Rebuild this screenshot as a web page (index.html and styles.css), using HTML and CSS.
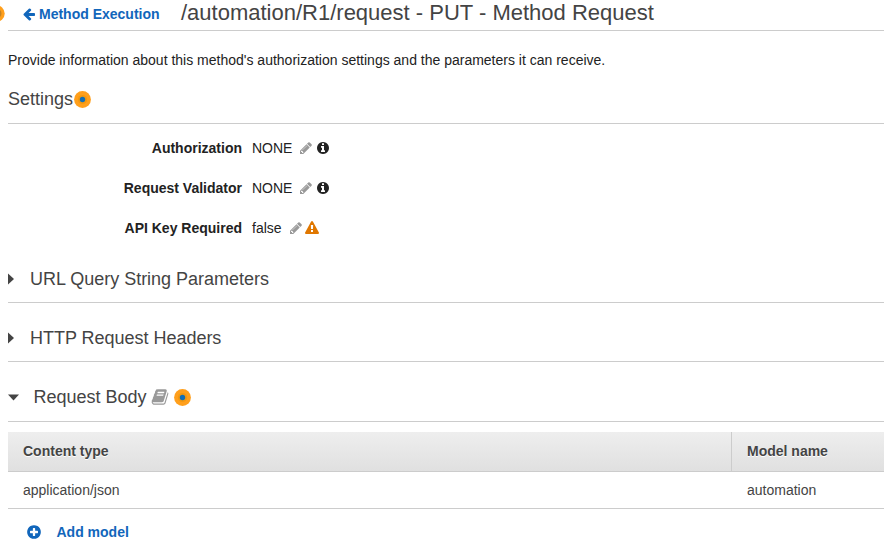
FILE: index.html
```html
<!DOCTYPE html>
<html lang="en">
<head>
<meta charset="utf-8">
<title>Method Request</title>
<link rel="stylesheet" href="styles.css">
</head>
<body>
<svg class="defs" width="0" height="0" aria-hidden="true">
  <symbol id="arrow" viewBox="0 0 1792 1792"><path d="M1664 896v128q0 53-32.5 90.5t-84.5 37.5h-704l293 294q38 36 38 90t-38 90l-75 76q-37 37-90 37-52 0-91-37l-651-652q-37-37-37-90 0-52 37-91l651-650q38-38 91-38 52 0 90 38l75 74q38 38 38 91t-38 91l-293 293h704q52 0 84.5 37.5t32.5 90.5z"/></symbol>
  <symbol id="pencil" viewBox="0 0 1792 1792"><path d="M491 1536l91-91-235-235-91 91v107h128v128h107zm523-928q0-22-22-22-10 0-17 7l-542 542q-7 7-7 17 0 22 22 22 10 0 17-7l542-542q7-7 7-17zm-54-192l416 416-832 832h-416v-416zm683 96q0 53-37 90l-166 166-416-416 166-165q36-38 90-38 53 0 91 38l235 234q37 39 37 91z"/></symbol>
  <symbol id="info" viewBox="0 0 1792 1792"><path d="M1152 1376v-160q0-14-9-23t-23-9h-96v-512q0-14-9-23t-23-9h-320q-14 0-23 9t-9 23v160q0 14 9 23t23 9h96v320h-96q-14 0-23 9t-9 23v160q0 14 9 23t23 9h448q14 0 23-9t9-23zm-128-896v-160q0-14-9-23t-23-9h-192q-14 0-23 9t-9 23v160q0 14 9 23t23 9h192q14 0 23-9t9-23zm640 416q0 209-103 385.5t-279.5 279.5-385.5 103-385.5-103-279.5-279.5-103-385.5 103-385.5 279.5-279.5 385.5-103 385.5 103 279.5 279.5 103 385.5z"/></symbol>
  <symbol id="warning" viewBox="0 0 1792 1792"><path d="M1024 1375v-190q0-14-9.5-23.5t-22.5-9.5h-192q-13 0-22.5 9.5t-9.5 23.5v190q0 14 9.5 23.5t22.5 9.5h192q13 0 22.5-9.5t9.5-23.5zm-2-374l18-459q0-12-10-19-13-11-24-11h-220q-11 0-24 11-10 7-10 21l17 457q0 10 10 16.5t24 6.5h185q14 0 23.5-6.5t10.5-16.5zm-14-934l768 1408q35 63-2 126-17 29-46.5 46t-63.5 17h-1536q-34 0-63.5-17t-46.5-46q-37-63-2-126l768-1408q17-31 47-49t65-18 65 18 47 49z"/></symbol>
  <symbol id="book" viewBox="0 0 1792 1792"><path d="M1703 478q40 57 18 129l-275 906q-19 64-76.5 107.5t-122.5 43.5h-923q-77 0-148.5-53.5t-99.5-131.5q-24-67-2-127 0-4 3-27t4-37q1-8-3-21.5t-3-19.5q2-11 8-21t16.5-23.5 16.5-23.5q23-38 45-91.5t30-91.5q3-10 .5-30t-.5-28q3-11 17-28t17-23q21-36 42-92t25-90q1-9-2.5-32t.5-28q4-13 22-30.5t22-22.5q19-26 42.5-84.5t27.5-96.5q1-8-3-25.5t-2-26.5q2-8 9-18t18-23 17-21q8-12 16.5-30.5t15-35 16-36 19.5-32 26.5-23.5 36-11.5 47.5 5.5l-1 3q38-9 51-9h761q74 0 114 56t18 130l-274 906q-36 119-71.5 153.5t-128.5 34.5h-869q-27 0-38 15-11 16-1 43 24 70 144 70h923q29 0 56-15.5t35-41.5l300-987q7-22 5-57 38 15 59 43zm-1064 2q-4 13 2 22.5t20 9.5h608q13 0 25.5-9.5t16.5-22.5l21-64q4-13-2-22.5t-20-9.5h-608q-13 0-25.5 9.5t-16.5 22.5zm-83 256q-4 13 2 22.5t20 9.5h608q13 0 25.5-9.5t16.5-22.5l21-64q4-13-2-22.5t-20-9.5h-608q-13 0-25.5 9.5t-16.5 22.5z"/></symbol>
  <symbol id="plus" viewBox="0 0 1792 1792"><path d="M1344 960v-128q0-26-19-45t-45-19h-256v-256q0-26-19-45t-45-19h-128q-26 0-45 19t-19 45v256h-256q-26 0-45 19t-19 45v128q0 26 19 45t45 19h256v256q0 26 19 45t45 19h128q26 0 45-19t19-45v-256h256q26 0 45-19t19-45zm320-64q0 209-103 385.5t-279.5 279.5-385.5 103-385.5-103-279.5-279.5-103-385.5 103-385.5 279.5-279.5 385.5-103 385.5 103 279.5 279.5 103 385.5z"/></symbol>
  <symbol id="dot" viewBox="0 0 17 17"><circle cx="8.5" cy="8.5" r="8.4" fill="#ff9f1c"/><circle cx="8.5" cy="8.5" r="4.6" fill="#f3980f"/><circle cx="8.5" cy="8.5" r="2.7" fill="#146eb4"/></symbol>
  <symbol id="dot-plain" viewBox="0 0 17 17"><circle cx="8.5" cy="8.5" r="8.2" fill="#ff9f1c"/><circle cx="8.5" cy="8.5" r="5" fill="#c58424"/></symbol>
</svg>

<header class="header">
  <svg class="dot dot-edge"><use href="#dot-plain"/></svg>
  <a class="back"><svg class="icon"><use href="#arrow"/></svg><span>Method Execution</span></a>
  <h1 class="title">/automation/R1/request - PUT - Method Request</h1>
</header>

<main class="content">
  <p class="intro">Provide information about this method's authorization settings and the parameters it can receive.</p>

  <h2 class="section settings"><span class="settings-text">Settings</span><svg class="dot"><use href="#dot"/></svg></h2>

  <dl class="fields">
    <div class="field"><dt>Authorization</dt><dd><span class="none">NONE</span><svg class="icon pencil"><use href="#pencil"/></svg><svg class="icon info"><use href="#info"/></svg></dd></div>
    <div class="field"><dt>Request Validator</dt><dd><span class="none">NONE</span><svg class="icon pencil"><use href="#pencil"/></svg><svg class="icon info"><use href="#info"/></svg></dd></div>
    <div class="field"><dt>API Key Required</dt><dd><span>false</span><svg class="icon pencil"><use href="#pencil"/></svg><svg class="icon warning"><use href="#warning"/></svg></dd></div>
  </dl>

  <h2 class="section query"><svg class="caret" viewBox="0 0 12 12"><path d="M0 .5L6 6L0 11.5Z"/></svg><span class="query-text">URL Query String Parameters</span></h2>
  <h2 class="section headers"><svg class="caret" viewBox="0 0 12 12"><path d="M0 .5L6 6L0 11.5Z"/></svg><span class="headers-text">HTTP Request Headers</span></h2>
  <h2 class="section body-section"><svg class="caret caret-open" viewBox="0 0 12 12"><path d="M0 2.5H11L5.5 8.5Z"/></svg><span class="body-text">Request Body</span><svg class="icon book"><use href="#book"/></svg><svg class="dot"><use href="#dot"/></svg></h2>

  <div class="table">
    <div class="row head"><div class="cell">Content type</div><div class="cell">Model name</div></div>
    <div class="row"><div class="cell">application/json</div><div class="cell">automation</div></div>
  </div>
  <a class="add"><svg class="icon"><use href="#plus"/></svg><span>Add model</span></a>
</main>
</body>
</html>
```
FILE: styles.css
```css
* { box-sizing: border-box; }
body {
  margin: 0;
  height: 554px;
  overflow: hidden;
  background: #fff;
  color: #222;
  font: 14px/20px "Liberation Sans", Arial, sans-serif;
}
h1, h2, p, dl, dt, dd { margin: 0; font-weight: normal; }
svg { display: block; flex: none; }
.defs { position: absolute; }
.icon { width: 14px; height: 14px; fill: currentColor; }
.dot { width: 17px; height: 17px; }

.header {
  display: flex;
  height: 31px;
  margin-left: 8px;
  border-bottom: 1px solid #ccc;
}
.dot-edge { margin: 5px 0 0 -20px; }
.back {
  display: flex;
  width: 158px;
  margin-left: 17px;
  padding-top: 4px;
  color: #1166bb;
  font-weight: bold;
  white-space: nowrap;
}
.back .icon { margin: 3px 3px 0 0; }
.title {
  padding-left: 1px;
  white-space: nowrap;
  color: #444;
  font-size: 22px;
  line-height: 26px;
}

.content { margin-left: 8px; }
.intro { height: 58px; padding-top: 19px; white-space: nowrap; }

.section {
  display: flex;
  align-items: center;
  color: #444;
  font-size: 18px;
  line-height: 24px;
  white-space: nowrap;
  border-bottom: 1px solid #ccc;
}
.settings { height: 35px; padding-bottom: 13px; }
.settings-text { margin: -2px 1px 0 0; }
.fields { padding-top: 14px; height: 132px; }
.field { display: flex; height: 40px; }
.field dt { width: 234px; text-align: right; font-weight: bold; }
.field dd { display: flex; margin-left: 10px; }
.pencil { margin: 3px 2px 0 7px; color: #999; }
.info { margin: 3px 0 0 .5px; }
.warning { margin: 3px 0 0; color: #e07700; }

.query { height: 47px; }
.headers { height: 59px; padding-top: 12px; }
.body-section { height: 60px; padding-top: 12px; }
.query-text, .headers-text { letter-spacing: -.02px; }
.body-text { margin-top: -2px; }
.caret { width: 12px; height: 12px; margin-right: 10px; fill: #444; }
.caret-open { margin-right: 13.5px; }
.book { width: 18px; height: 18px; margin: -2px 5px 0 4px; color: #999; }

.table { margin-top: 10px; color: #444; }
.row {
  display: grid;
  grid-template-columns: 723px 1fr;
  height: 37px;
  border-bottom: 1px solid #ccc;
}
.cell { padding: 8px 0 0 15px; white-space: nowrap; }
.head {
  height: 40px;
  font-weight: bold;
  text-shadow: 0 1px 0 #fff;
  background: linear-gradient(#eee, #e0e0e0);
}
.head .cell { padding-top: 9px; }
.cell + .cell { border-left: 1px solid transparent; }
.head .cell + .cell { border-left-color: #ccc; }
.add { display: flex; padding: 13px 0 0 18px; color: #1166bb; font-weight: bold; }
.add .icon { width: 16px; height: 16px; margin: 2px 14.5px 0 0; }
```
